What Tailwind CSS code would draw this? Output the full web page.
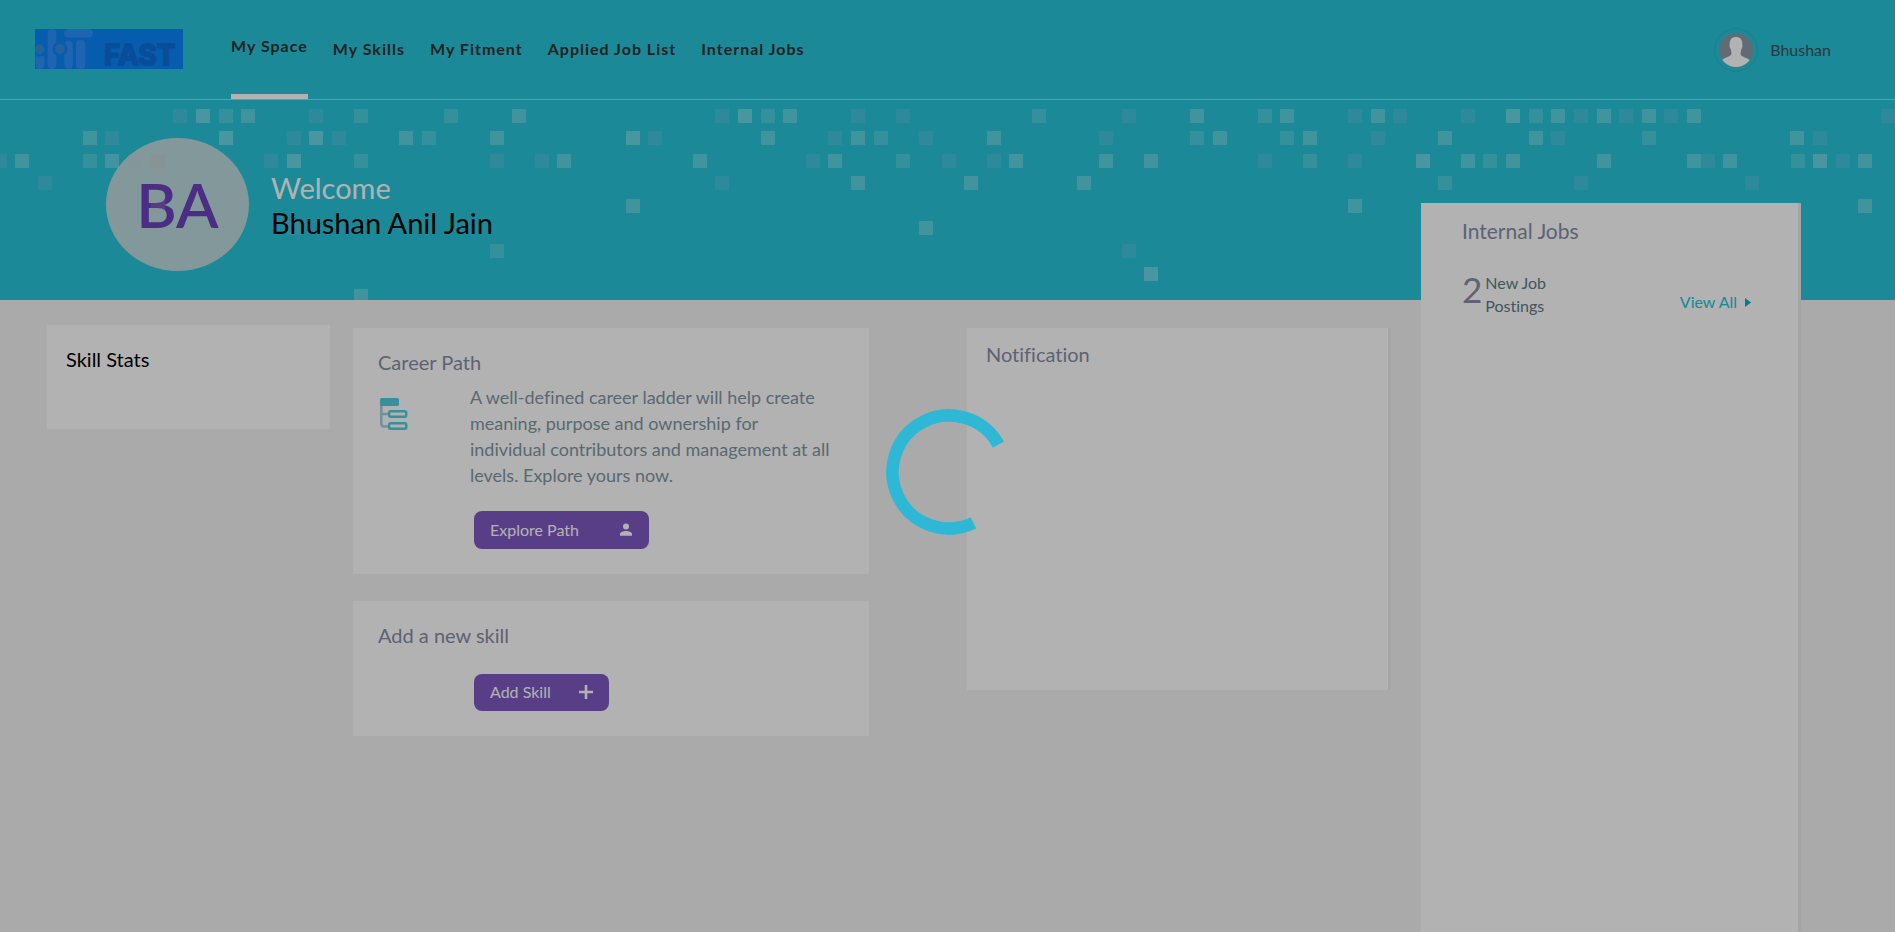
<!DOCTYPE html>
<html lang="en">
<head>
<meta charset="utf-8">
<meta name="viewport" content="width=device-width, initial-scale=1">
<title>My Space</title>
<script src="https://cdn.jsdelivr.net/npm/@tailwindcss/browser@4"></script>
</head>
<body class="flex min-h-screen flex-col bg-[#f4f4f4] font-[Lato,sans-serif] text-[#878da6] [font-variant-ligatures:none]">

<header class="flex h-[100px] items-stretch border-b border-[#c5cad4] bg-[#27c5d9] pr-16 pl-[35px]">
  <a href="#" aria-label="FAST home" class="mt-[29px] block shrink-0 self-start">
    <svg width="148" height="40" viewBox="0 0 148 40" class="block">
      <rect width="148" height="40" fill="#0a86f9"/>
      <g fill="#2b90fe">
        <rect x="0.7" y="25" width="8.6" height="15" rx="4"/>
        <rect x="12.7" y="0" width="8.6" height="40" rx="4.2"/>
        <rect x="29.3" y="11.5" width="8.4" height="28.5" rx="4.2"/>
        <rect x="41" y="11" width="9.3" height="29" rx="4"/>
        <rect x="29" y="0" width="29" height="8.4" rx="4.2"/>
      </g>
      <circle cx="4.7" cy="20" r="7.5" fill="#0a86f9"/>
      <circle cx="25" cy="20" r="7.5" fill="#0a86f9"/>
      <circle cx="4.7" cy="20.4" r="4.8" fill="#338ddd"/>
      <circle cx="25" cy="20" r="5" fill="#338ddd"/>
      <text x="69" y="36" font-family="Inter" font-weight="700" font-size="28" fill="#0e6fdd" stroke="#0e6fdd" stroke-width="2" stroke-linejoin="round">FAST</text>
    </svg>
  </a>
  <nav aria-label="Main" class="ml-[35px] flex items-stretch text-[16px] font-bold tracking-[1px] whitespace-nowrap text-[#333]">
    <div class="my-[27px] flex border border-[#2ac2d6]">
      <a href="#" aria-current="page" class="relative flex items-center border-r border-[#2ac2d6] px-3 pb-2">My Space<span class="absolute inset-x-3 -bottom-[28px] h-[5px] bg-white"></span></a>
      <a href="#" class="flex items-center border-r border-[#2ac2d6] px-3 pb-[2px]">My Skills</a>
      <a href="#" class="flex items-center border-r border-[#2ac2d6] px-3 pb-[2px]">My Fitment</a>
      <a href="#" class="flex items-center border-r border-[#2ac2d6] px-3 pb-[2px]">Applied Job List</a>
      <a href="#" class="flex items-center px-3 pb-[2px]">Internal Jobs</a>
    </div>
  </nav>
  <button type="button" class="ml-auto flex items-center gap-3 text-[16px] text-[#405058]">
    <svg width="44" height="44" viewBox="0 0 44 44">
      <defs><clipPath id="face"><circle cx="22" cy="22" r="17"/></clipPath></defs>
      <circle cx="22" cy="22" r="21.3" fill="none" stroke="#2bb4c8"/>
      <g clip-path="url(#face)">
        <rect width="44" height="44" fill="#8a9aa8"/>
        <path d="M22 9c4 0 6.300 2.500 6.300 6.500 0 1.500.300 2.200 0 3.500-.3 1.400-.9 1.800-1.200 3-.3 1.500-.5 2.500-.5 3.800 0 2.300 3 3.200 6 4.400 2.600 1 4 2.200 4.400 4V42H7v-8c.4-1.800 1.800-3 4.400-4 3-1.200 6-2.100 6-4.400 0-1.300-.2-2.300-.5-3.800-.3-1.200-.9-1.600-1.200-3-.3-1.300 0-2 0-3.500C15.700 11.500 18 9 22 9z" fill="#fff"/>
      </g>
    </svg>
    Bhushan
  </button>
</header>

<section class="relative flex h-[200px] items-center overflow-hidden bg-[#27c5d9] pl-[106px]">
  <div class="mt-[9px] flex h-[133px] w-[143px] items-center justify-center rounded-[50%] bg-[#badadd] text-[62px] font-semibold text-[#6c43be]">BA</div>
  <svg class="pointer-events-none absolute inset-0 h-full w-full" aria-hidden="true"><g id="tiles"></g></svg>
  <h1 class="relative mt-[10px] ml-[22px] text-[29px] leading-[35px] text-black"><span class="block text-white">Welcome</span>Bhushan Anil Jain</h1>
</section>

<main class="grid flex-1 grid-cols-[306fr_614fr_454fr_380fr] pr-[94px] pl-[47px]">
  <div class="pt-[25px] pr-[23px]">
    <section class="h-[104px] bg-white px-[19px] pt-[19px]">
      <h2 class="text-[20px] leading-[30px] text-black">Skill Stats</h2>
    </section>
  </div>

  <div class="flex flex-col gap-[27px] pt-7 pr-[98px]">
    <section class="bg-white px-[25px] pt-[19px] pb-[25px]">
      <h2 class="text-[20px] leading-[30px]">Career Path</h2>
      <div class="mt-[7px] flex">
        <svg width="28" height="32" viewBox="0 0 28 32" class="mt-[14px] ml-[2px] shrink-0" fill="none">
          <path d="M1.300 7v18.500q0 3 3 3H9M1.300 16H9" stroke="#a3d2d8" stroke-width="2.600"/>
          <rect width="19" height="8" rx="1.500" fill="#4fcfe0"/>
          <rect x="9.200" y="13.200" width="17" height="5.600" rx="1.300" stroke="#4fcfe0" stroke-width="2.400"/>
          <rect x="9.200" y="25.200" width="17" height="5.600" rx="1.300" stroke="#4fcfe0" stroke-width="2.400"/>
        </svg>
        <div class="ml-[62px]">
          <p class="text-[18px] leading-[26px] text-[#7e97a4]">A well-defined career ladder will help create<br>meaning, purpose and ownership for<br>individual contributors and management at all<br>levels. Explore yours now.</p>
          <button type="button" class="mt-[23px] ml-1 flex h-[38px] w-[175px] items-center justify-between rounded-lg bg-[#7f59c1] pr-[17px] pb-px pl-4 text-[16px] text-white">Explore Path
            <svg width="12" height="13" viewBox="0 0 12 13" fill="#fff"><circle cx="6" cy="3.500" r="3"/><path d="M0 12.800V11c0-2 3.500-3 6-3s6 1 6 3v1.800z"/></svg>
          </button>
        </div>
      </div>
    </section>
    <section class="bg-white px-[25px] pt-[19px] pb-[25px]">
      <h2 class="text-[20px] leading-[30px]">Add a new skill</h2>
      <button type="button" class="mt-6 ml-24 flex h-[37px] w-[135px] items-center justify-between rounded-lg bg-[#7f59c1] px-4 pb-[2px] text-[16px] text-white">Add Skill
        <svg width="14" height="14" viewBox="0 0 14 14" stroke="#fff" stroke-width="2.600"><path d="M7 0v14M0 7h14"/></svg>
      </button>
    </section>
  </div>

  <div class="pt-7 pr-[30px]">
    <section class="h-[362px] border-r-[3px] border-[#ebecec] bg-white px-[19px] pt-[11px]">
      <h2 class="text-[20px] leading-[30px]">Notification</h2>
    </section>
  </div>

  <aside class="relative -mt-[97px] border-r-[3px] border-[#ebecec] bg-white px-[41px] pt-3">
    <h2 class="text-[21px] leading-[32px]">Internal Jobs</h2>
    <div class="mt-6 flex items-center">
      <span class="-mt-[10px] text-[35px] leading-[46px]">2</span>
      <span class="ml-[3px] text-[16px] leading-[23px] text-[#617b86]">New Job<br>Postings</span>
      <a href="#" class="mt-4 mr-[6px] ml-auto flex items-center gap-2 text-[16px] text-[#21c6dc]">View All
        <svg width="6" height="9" viewBox="0 0 6 9" fill="#00b2cc"><path d="M0 0l6 4.500L0 9z"/></svg>
      </a>
    </div>
  </aside>
</main>

<div role="status" aria-label="Loading" class="fixed inset-0 flex items-center justify-center bg-black/30 pt-3 pl-[2px]">
  <svg width="126" height="126" viewBox="-63 -63 126 126" fill="none">
    <path d="M24.500 50.900A56.500 56.500 0 1 1 49.400-27.400" stroke="#2eb8d6" stroke-width="12.600"/>
  </svg>
</div>

<script>
  // Tile rows of the banner: y, then x and tone pairs (tone 1 faint to 4 bright).
  const rows = [
    [9, 173,1,196,4,219,2,241,3,309,1,354,2,444,2,512,3,715,1,738,4,761,2,783,3,851,1,896,1,1032,2,1122,1,1190,3,1258,2,1280,3,1348,1,1371,3,1393,1,1461,1,1506,4,1529,2,1551,3,1574,1,1597,3,1619,1,1642,3,1664,1,1687,3,1881,1],
    [31, 83,3,105,1,219,4,287,1,309,4,332,1,399,3,422,2,490,3,626,4,648,1,761,3,828,1,851,3,874,2,919,1,987,3,1099,1,1190,2,1213,3,1280,2,1303,3,1371,1,1438,3,1529,3,1551,1,1642,2,1790,3,1813,1],
    [54, -7,1,15,3,83,2,105,3,128,0,151,5,264,1,287,4,354,2,490,1,535,1,557,3,693,3,806,1,828,3,896,2,942,1,987,1,1009,3,1099,3,1144,3,1258,1,1303,2,1348,1,1416,4,1461,3,1483,2,1506,3,1597,3,1687,3,1701,1,1723,3,1791,2,1813,4,1836,1,1858,3],
    [76, 38,1,715,1,851,3,964,3,1077,3,1438,2,1574,1,1745,1],
    [99, 151,0,626,3,1348,3,1858,3],
    [121, 287,1,919,3],
    [144, 490,2,1122,1],
    [167, 1144,4],
    [189, 354,3]
  ];
  const tones = [["#d8c8d0", 0.15], ["#eecdfa", 0.14], ["#ffffff", 0.17], ["#ffffff", 0.25], ["#ffffff", 0.31], ["#d8c8d0", 0.4]];
  const tiles = document.getElementById("tiles");
  for (const [y, ...items] of rows) {
    for (let i = 0; i < items.length; i += 2) {
      const r = document.createElementNS("http://www.w3.org/2000/svg", "rect");
      const [fill, opacity] = tones[items[i + 1]];
      for (const [k, v] of Object.entries({ x: items[i], y, width: 14, height: 14, fill, "fill-opacity": opacity })) r.setAttribute(k, v);
      tiles.append(r);
    }
  }
</script>
</body>
</html>
